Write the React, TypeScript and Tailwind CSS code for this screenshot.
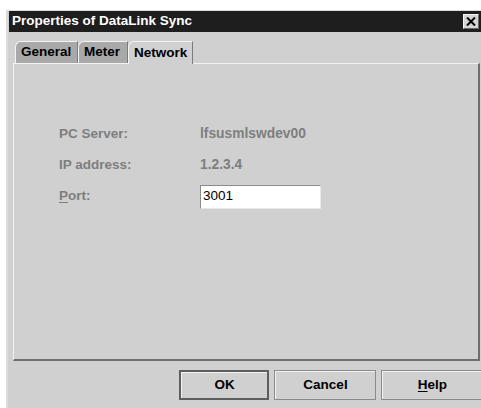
import React from 'react';

const font = "font-['Liberation_Sans',Arial,Helvetica,sans-serif]";

type TabProps = { label: string; width: string; active?: boolean };

const Tab: React.FC<TabProps> = ({ label, width, active }) => (
  <div
    className={`${width} relative flex items-center pl-[5px] text-[13.5px] font-bold text-black border-t border-l border-r rounded-tl-[6px] border-t-[#f4f4f4] border-l-[#f4f4f4] border-r-[#7c7c7c] ${
      active ? 'h-[23px] -mb-px bg-[#d0d0d0] z-10' : 'h-[22px] bg-[#a9a9a9]'
    }`}
  >
    {label}
  </div>
);

const Field: React.FC<{ label: React.ReactNode; children: React.ReactNode }> = ({ label, children }) => (
  <>
    <div className="h-[23px] flex items-center text-[13.5px] font-bold text-[#7e7e7e]">{label}</div>
    <div className="h-[23px] flex items-center text-[13.8px] font-bold text-[#7e7e7e]">{children}</div>
  </>
);

const Button: React.FC<{ children: React.ReactNode; width: string; primary?: boolean }> = ({
  children,
  width,
  primary,
}) => (
  <button
    className={`${width} h-[30px] flex items-center justify-center text-[13.5px] font-bold text-black bg-[#d0d0d0] ${
      primary ? 'border-2 border-[#5e5e5e]' : 'border border-[#8a8a8a]'
    }`}
  >
    <span className="w-full h-full flex items-center justify-center border-t border-l border-[#f2f2f2]">
      {children}
    </span>
  </button>
);

export default function App() {
  return (
    <div className={`w-[481px] h-[408px] bg-white overflow-hidden ${font}`}>
      <div className="ml-[6px] mt-[10px] w-[490px] h-[420px] bg-[#d0d0d0] border-l-2 border-t border-[#dcdcdc]">
        {/* title bar */}
        <div className="ml-px h-[21px] bg-[#1e1e1e] flex items-center justify-between">
          <span className="pl-[3px] text-[13.5px] font-bold text-white">Properties of DataLink Sync</span>
          <div className="mr-[17px] w-[16px] h-[15px] bg-[#d4d4d4] border-t border-l border-[#f6f6f6] border-r border-b border-r-[#6a6a6a] border-b-[#6a6a6a] flex items-center justify-center">
            <svg width="10" height="9" viewBox="0 0 10 9">
              <path d="M1 0.5 L9 8.5 M9 0.5 L1 8.5" stroke="#000" strokeWidth="2" />
            </svg>
          </div>
        </div>

        {/* tabs */}
        <div className="ml-[7px] mt-[9px] flex items-end">
          <Tab label="General" width="w-[63px]" />
          <Tab label="Meter" width="w-[50px]" />
          <Tab label="Network" width="w-[65px]" active />
        </div>

        {/* tab panel */}
        <div className="ml-[5px] w-[467px] h-[298px] border-t border-l border-[#f2f2f2] border-r-2 border-b-2 border-r-[#6e6e6e] border-b-[#6e6e6e] pl-[45px] pt-[59px]">
          <div className="grid grid-cols-[141px_1fr] gap-y-[8px]">
            <Field label="PC Server:">lfsusmlswdev00</Field>
            <Field label="IP address:">1.2.3.4</Field>
            <Field
              label={
                <span>
                  <span className="underline underline-offset-2">P</span>ort:
                </span>
              }
            >
              <div className="w-[121px] h-[24px] bg-white border-t border-l border-[#8c8c8c] border-r border-b border-r-[#e8e8e8] border-b-[#e8e8e8] flex items-center pl-[2px] text-[13.5px] font-normal text-black">
                3001
              </div>
            </Field>
          </div>
        </div>

        {/* dialog buttons */}
        <div className="mt-[9px] ml-[171px] flex gap-[5px]">
          <Button width="w-[90px]" primary>
            OK
          </Button>
          <Button width="w-[102px]">Cancel</Button>
          <Button width="w-[102px]">
            <span>
              <span className="underline underline-offset-2">H</span>elp
            </span>
          </Button>
        </div>
      </div>
    </div>
  );
}
